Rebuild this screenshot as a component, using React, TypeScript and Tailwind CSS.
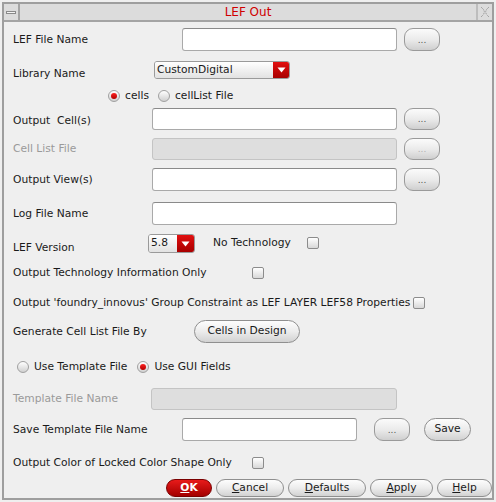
import React from 'react';

const font = { fontFamily: '"DejaVu Sans", Verdana, sans-serif' };

const Input = ({ w, disabled }: { w: string; disabled?: boolean }) => (
  <div
    className={`${w} h-full rounded-[3px] border ${
      disabled ? 'bg-[#dedede] border-[#c4c4c4]' : 'bg-white border-[#a9a9a9] border-t-[#8a8a8a]'
    }`}
  />
);

const DotsButton = ({ disabled, className = '' }: { disabled?: boolean; className?: string }) => (
  <div
    className={`w-[36px] h-full rounded-[9px] border border-[#9a9a9a] bg-gradient-to-b from-[#fbfbfb] via-[#ebebeb] to-[#cfcfcf] flex items-end justify-center pb-[5px] text-[9px] leading-none ${
      disabled ? 'text-[#b0b0b0]' : 'text-[#555]'
    } ${className}`}
  >
    ...
  </div>
);

const Arrow = () => (
  <svg width="9" height="6" viewBox="0 0 9 6">
    <path d="M0.5 0.5 H8.5 L4.5 5.5 Z" fill="#fff" />
  </svg>
);

const Dropdown = ({ w, text, redW }: { w: string; text: string; redW: string }) => (
  <div className={`${w} h-full flex rounded-[3px] border border-[#9a9a9a] overflow-hidden`}>
    <div className="flex-1 bg-gradient-to-b from-white to-[#e2e2e2] pl-[2px] flex items-center text-[10.7px] text-[#1a1a1a]">
      {text}
    </div>
    <div className={`${redW} bg-gradient-to-b from-[#e21010] to-[#a80000] flex items-center justify-center`}>
      <Arrow />
    </div>
  </div>
);

const Checkbox = ({ className = '' }: { className?: string }) => (
  <div
    className={`w-[12px] h-[12px] rounded-[2px] border border-[#8c8c8c] bg-gradient-to-b from-white to-[#d8d8d8] ${className}`}
  />
);

const Radio = ({ on }: { on?: boolean }) => (
  <div className="w-[12px] h-[12px] rounded-full border border-[#a0a0a0] bg-gradient-to-b from-white to-[#d0d0d0] flex items-center justify-center">
    {on && <div className="w-[6px] h-[6px] rounded-full bg-gradient-to-b from-[#ff2020] to-[#b00000]" />}
  </div>
);

const PillButton = ({ w, children, red }: { w: string; children: React.ReactNode; red?: boolean }) => (
  <div
    className={`${w} h-full rounded-full border flex items-center justify-center text-[10.7px] ${
      red
        ? 'border-[#7a0000] bg-gradient-to-b from-[#e81a1a] to-[#a40000] text-white font-bold'
        : 'border-[#8f8f8f] bg-gradient-to-b from-[#fdfdfd] via-[#ececec] to-[#d2d2d2] text-[#1a1a1a]'
    }`}
  >
    {children}
  </div>
);

const Label = ({ w, children, muted, className = '' }: { w?: string; children: React.ReactNode; muted?: boolean; className?: string }) => (
  <span className={`${w ?? ''} shrink-0 whitespace-pre leading-[14px] text-[10.7px] ${muted ? 'text-[#9a9a9a]' : 'text-[#1a1a1a]'} ${className}`}>
    {children}
  </span>
);

export default function App() {
  return (
    <div className="w-[496px] h-[502px] bg-[#efefef] p-[2px]" style={font}>
      <div className="w-full h-full border-2 border-[#9e9e9e] flex flex-col">
        {/* title bar */}
        <div className="h-[18px] shrink-0 bg-[#dcdcdc] border-b-2 border-[#a4a4a4] flex">
          <div className="w-[16px] border-r-2 border-[#a4a4a4] flex items-center justify-center">
            <div className="w-[10px] h-[3px] bg-[#f4f4f4] border border-[#8a8a8a]" />
          </div>
          <div className="flex-1 flex items-center justify-center text-[12px] text-[#d00000] leading-none pb-[1px]">LEF Out</div>
          <div className="w-[16px] border-l-2 border-[#bdbdbd] flex items-center justify-center">
            <svg width="10" height="12" viewBox="0 0 10 12">
              <path
                d="M1 1 L3.5 3.5 M9 1 L6.5 3.5 M3.5 3.5 L4.5 6 L3.5 8.5 M6.5 3.5 L5.5 6 L6.5 8.5 M1 11 L3.5 8.5 M9 11 L6.5 8.5"
                stroke="#8f8f8f"
                strokeWidth="1"
                strokeDasharray="1 1"
                fill="none"
              />
            </svg>
          </div>
        </div>

        {/* body */}
        <div className="flex flex-col pl-[9px]">
          <div className="flex items-center h-[23px] mt-[6px]">
            <Label w="w-[169px]">LEF File Name</Label>
            <Input w="w-[215px]" />
            <DotsButton className="ml-[7px]" />
          </div>

          <div className="flex items-start h-[22px] mt-[9px]">
            <Label w="w-[141px]" className="mt-[7px]">Library Name</Label>
            <div className="h-[18px] mt-[1px]">
              <Dropdown w="w-[136px]" text="CustomDigital" redW="w-[16px]" />
            </div>
          </div>

          <div className="flex items-center h-[14px] mt-[7px] pl-[95px]">
            <Radio on />
            <Label className="ml-[5px]">cells</Label>
            <div className="ml-[9px]">
              <Radio />
            </div>
            <Label className="ml-[5px]">cellList File</Label>
          </div>

          <div className="flex items-center h-[22px] mt-[5px]">
            <Label w="w-[139px]" className="mt-[3px]">Output  Cell(s)</Label>
            <Input w="w-[245px]" />
            <DotsButton className="ml-[7px]" />
          </div>

          <div className="flex items-center h-[22px] mt-[8px]">
            <Label w="w-[139px]" muted>Cell List File</Label>
            <Input w="w-[245px]" disabled />
            <DotsButton className="ml-[7px]" disabled />
          </div>

          <div className="flex items-center h-[23px] mt-[8px]">
            <Label w="w-[139px]">Output View(s)</Label>
            <Input w="w-[245px]" />
            <DotsButton className="ml-[7px]" />
          </div>

          <div className="flex items-center h-[23px] mt-[11px]">
            <Label w="w-[139px]">Log File Name</Label>
            <Input w="w-[245px]" />
          </div>

          <div className="flex items-start h-[20px] mt-[9px]">
            <Label w="w-[135px]" className="mt-[7px]">LEF Version</Label>
            <div className="h-[19px]">
              <Dropdown w="w-[47px]" text="5.8" redW="w-[17px]" />
            </div>
            <Label w="w-[94px]" className="ml-[18px] mt-[2px]">No Technology</Label>
            <Checkbox className="mt-[3px]" />
          </div>

          <div className="flex items-center h-[14px] mt-[12px]">
            <Label w="w-[239px]">Output Technology Information Only</Label>
            <Checkbox />
          </div>

          <div className="flex items-center h-[14px] mt-[16px]">
            <Label>Output 'foundry_innovus' Group Constraint as LEF LAYER LEF58 Properties</Label>
            <Checkbox className="ml-[3px]" />
          </div>

          <div className="flex items-center h-[23px] mt-[10px]">
            <Label w="w-[181px]">Generate Cell List File By</Label>
            <PillButton w="w-[106px]">Cells in Design</PillButton>
          </div>

          <div className="flex items-center h-[14px] mt-[17px] pl-[4px]">
            <Radio />
            <Label className="ml-[5px]">Use Template File</Label>
            <div className="ml-[10px]">
              <Radio on />
            </div>
            <Label className="ml-[5px]">Use GUI Fields</Label>
          </div>

          <div className="flex items-center h-[22px] mt-[14px]">
            <Label w="w-[138px]" muted>Template File Name</Label>
            <Input w="w-[246px]" disabled />
          </div>

          <div className="flex items-center h-[23px] mt-[8px]">
            <Label w="w-[169px]">Save Template File Name</Label>
            <Input w="w-[175px]" />
            <DotsButton className="ml-[17px]" />
            <PillButton w="w-[47px] ml-[14px]">Save</PillButton>
          </div>

          <div className="flex items-center h-[14px] mt-[15px]">
            <Label w="w-[239px]">Output Color of Locked Color Shape Only</Label>
            <Checkbox />
          </div>

          <div className="flex items-center h-[18px] mt-[9px] pl-[153px] gap-[4px]">
            <PillButton w="w-[46px]" red>
              <span className="underline">O</span>K
            </PillButton>
            <PillButton w="w-[68px]">
              <span className="underline">C</span>ancel
            </PillButton>
            <PillButton w="w-[78px]">
              <span className="underline">D</span>efaults
            </PillButton>
            <PillButton w="w-[63px]">
              <span className="underline">A</span>pply
            </PillButton>
            <PillButton w="w-[55px]">
              <span className="underline">H</span>elp
            </PillButton>
          </div>
        </div>
      </div>
    </div>
  );
}
